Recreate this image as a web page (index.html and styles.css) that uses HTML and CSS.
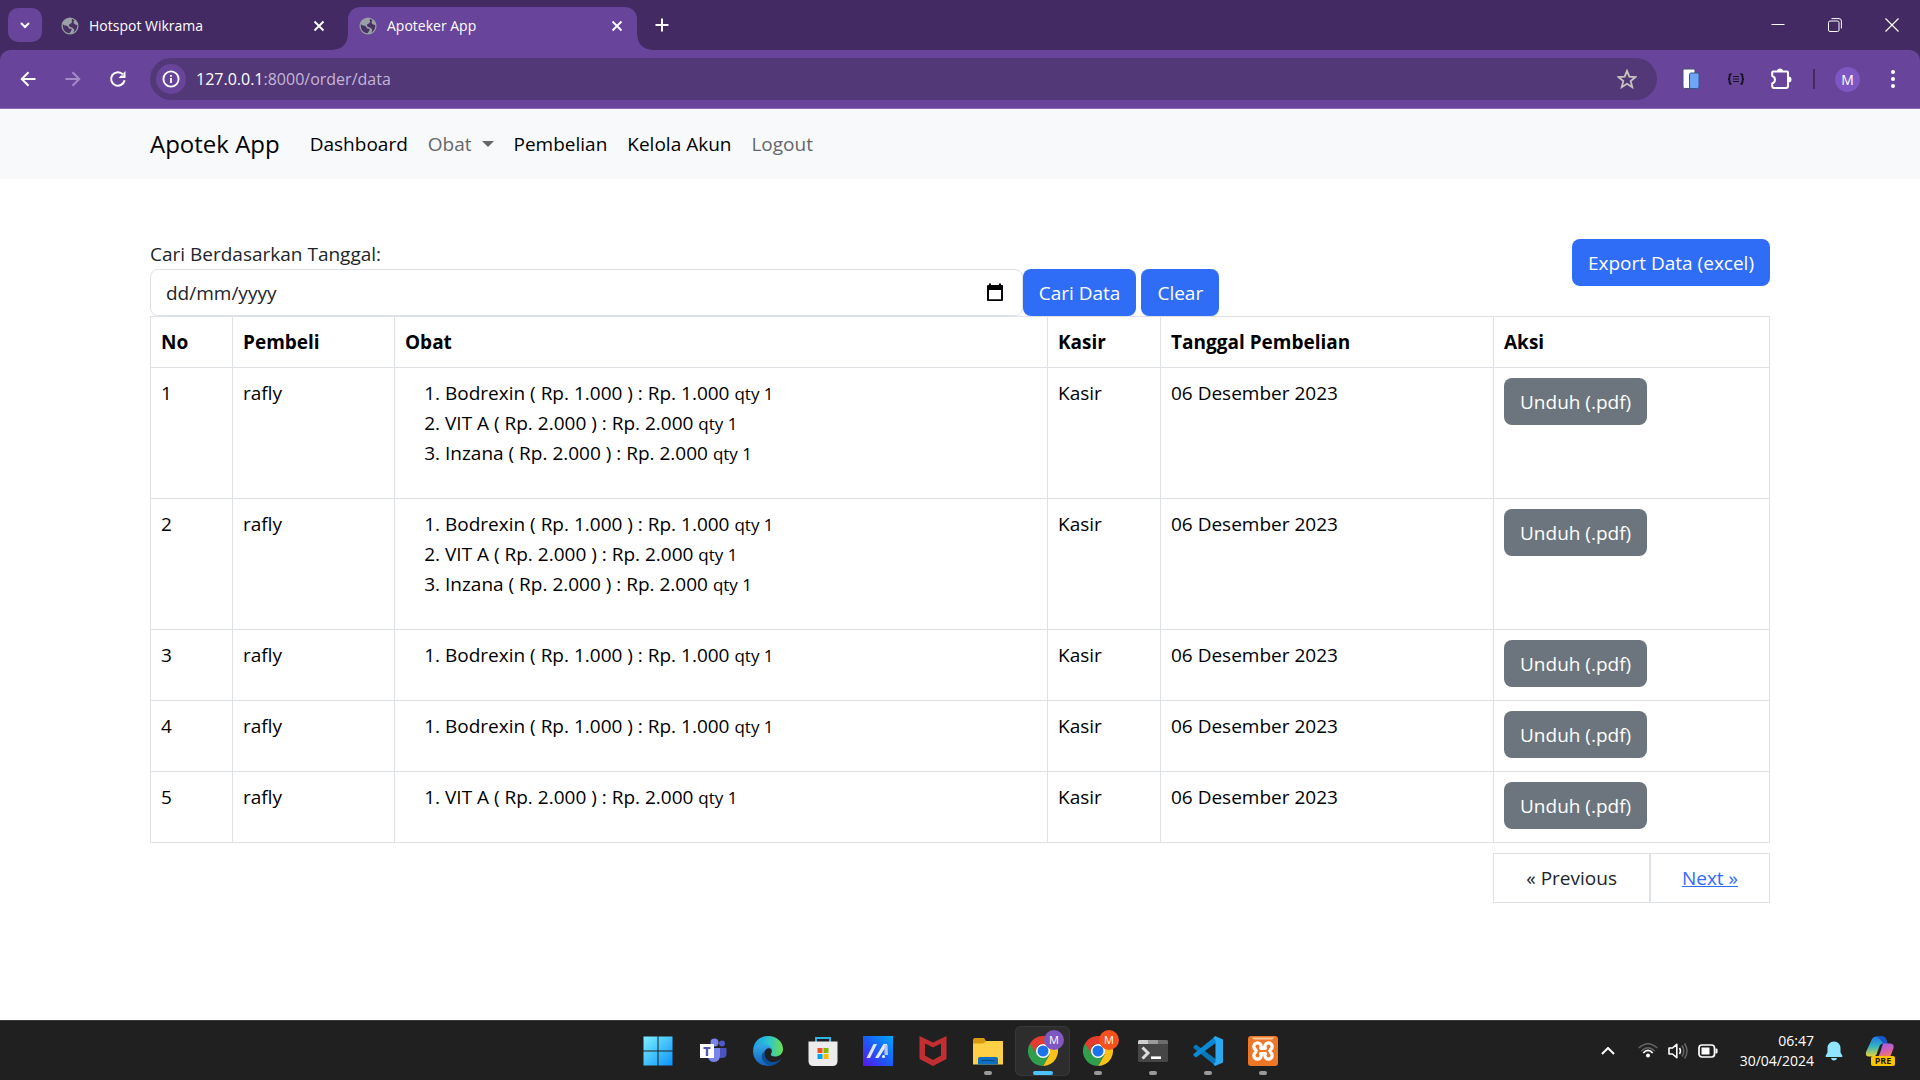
FILE: index.html
```html
<!DOCTYPE html>
<html lang="id">
<head>
<meta charset="utf-8">
<title>Apoteker App</title>
<link rel="stylesheet" href="styles.css">
</head>
<body>
<svg width="0" height="0" class="defs" aria-hidden="true">
  <defs>
    <symbol id="globe" viewBox="0 0 20 20"><circle cx="10" cy="10" r="9.500" fill="#9aa0a6"/><path d="M2 8 C4 10 7 9 8 11 S9 13 11 13 S11 16 9.500 18 C5 18 1.500 14 2 8Z M15 3.500 C13 6 14 8 18 9 C18.500 13 16 16.500 13.500 17.500 C15 15 15 14 14 13 C12 11 11 12 9 10 C8 7.500 11 8 12 6 S11 4 12.500 2.300Z" fill="#483263"/></symbol>
    <symbol id="cross" viewBox="0 0 12 12"><path d="M1.500 1.500 L10.500 10.500 M10.500 1.500 L1.500 10.500" stroke="#fff" stroke-width="1.800" fill="none"/></symbol>
    <symbol id="chrome" viewBox="0 0 30 30"><path d="M15 8 H28.300 A15 15 0 0 1 15 30 L21.500 18.500 Z" fill="#fbc116"/><path d="M2 7.500 A15 15 0 0 0 15 30 L21.500 18.700 L15 15Z" fill="#2f9e4d"/><path d="M2 7.500 A15 15 0 0 1 28.300 8 H15 A7 7 0 0 0 8.500 18.500Z" fill="#e33b2e"/><circle cx="15" cy="15" r="7" fill="#fff"/><circle cx="15" cy="15" r="5.500" fill="#1a73e8"/></symbol>
  </defs>
</svg>

<header class="browser">
  <div class="tabstrip">
    <button class="tab-search" aria-label="Cari tab"><svg width="12" height="12" viewBox="0 0 12 12"><path d="M2 4 L6 8 L10 4" stroke="#fff" stroke-width="2" fill="none"/></svg></button>
    <div class="tab tab-idle">
      <svg width="18" height="18"><use href="#globe"/></svg>
      <span class="tab-title">Hotspot Wikrama</span>
      <button class="icon-btn" aria-label="Tutup tab"><svg width="12" height="12"><use href="#cross"/></svg></button>
    </div>
    <div class="tab tab-active">
      <svg width="18" height="18"><use href="#globe"/></svg>
      <span class="tab-title">Apoteker App</span>
      <button class="icon-btn" aria-label="Tutup tab"><svg width="12" height="12"><use href="#cross"/></svg></button>
    </div>
    <button class="new-tab" aria-label="Tab baru"><svg width="14" height="14" viewBox="0 0 14 14"><path d="M7 0.500 V13.500 M0.500 7 H13.500" stroke="#fff" stroke-width="2"/></svg></button>
    <div class="window-controls">
      <button class="win-btn" aria-label="Kecilkan"><svg width="14" height="14" viewBox="0 0 14 14"><path d="M0.500 6.500 H13.500" stroke="#fff"/></svg></button>
      <button class="win-btn" aria-label="Pulihkan"><svg width="14" height="14" viewBox="0 0 14 14" fill="none" stroke="#fff"><rect x="0.500" y="3" width="10.500" height="10.500" rx="1.500"/><path d="M3.500 0.600 H11 Q13.400 0.600 13.400 3 V10.500" /></svg></button>
      <button class="win-btn" aria-label="Tutup"><svg width="14" height="14" viewBox="0 0 14 14"><path d="M0.500 0.500 L13.500 13.500 M13.500 0.500 L0.500 13.500" stroke="#fff" stroke-width="1.200"/></svg></button>
    </div>
  </div>
  <div class="toolbar">
    <button class="tool" aria-label="Kembali"><svg width="16" height="16" viewBox="0 0 16 16"><path d="M15.500 8 H2 M8.500 1.300 L1.800 8 L8.500 14.700" stroke="#fff" stroke-width="2" fill="none"/></svg></button>
    <button class="tool" aria-label="Maju"><svg width="16" height="16" viewBox="0 0 16 16"><path d="M0.500 8 H14 M7.500 1.300 L14.200 8 L7.500 14.700" stroke="#a58cc9" stroke-width="2" fill="none"/></svg></button>
    <button class="tool" aria-label="Muat ulang"><svg width="18" height="18" viewBox="0 0 18 18"><path d="M15.600 10.300 A6.800 6.800 0 1 1 14 4.400" stroke="#fff" stroke-width="2" fill="none"/><path d="M16.500 1 V8 H9.500 L12 5.500 L14.500 5.500 V3Z" fill="#fff"/></svg></button>
    <div class="omnibox">
      <button class="site-info" aria-label="Info situs"><svg width="18" height="18" viewBox="0 0 18 18"><circle cx="9" cy="9" r="7.600" stroke="#fff" stroke-width="1.900" fill="none"/><path d="M9 8 V13 M9 5 V6.800" stroke="#fff" stroke-width="1.800"/></svg></button>
      <span class="url">127.0.0.1<span class="url-rest">:8000/order/data</span></span>
      <button class="icon-btn" aria-label="Tandai"><svg width="20" height="20" viewBox="0 0 20 20"><path d="M10 1.800 L12.300 7.600 L18.500 8 L13.700 12 L15.300 18.200 L10 14.800 L4.700 18.200 L6.300 12 L1.500 8 L7.700 7.600Z" stroke="#c9c3bf" stroke-width="1.800" fill="none"/></svg></button>
    </div>
    <div class="extensions">
      <button class="tool" aria-label="Ekstensi perangkat"><svg width="18" height="22" viewBox="0 0 18 22"><rect x="1" y="1" width="12" height="19.500" rx="1.500" fill="#fff" stroke="#46536e" stroke-width="1"/><rect x="7.500" y="5" width="9.500" height="15.500" rx="1.500" fill="#6fa5f5" stroke="#35568f" stroke-width="1"/></svg></button>
      <button class="tool" aria-label="Ekstensi JSON"><svg width="18" height="12" viewBox="0 0 18 12" fill="none" stroke="#17121f"><path d="M4.500 1 Q2.500 1 2.500 3 V4.500 Q2.500 6 1 6 Q2.500 6 2.500 7.500 V9 Q2.500 11 4.500 11 M13.500 1 Q15.500 1 15.500 3 V4.500 Q15.500 6 17 6 Q15.500 6 15.500 7.500 V9 Q15.500 11 13.500 11" stroke-width="1.800"/><path d="M6 3.500 H12 M6 6 H12 M6 8.500 H12" stroke-width="1.200"/></svg></button>
      <button class="tool" aria-label="Ekstensi"><svg width="22" height="22" viewBox="0 0 22 22"><path d="M3 3.500 H17 Q18 3.500 18 4.500 V18 Q18 20 16 20 H4 Q2.200 20 2.200 18 V15.500 Q5 14.500 5 11.800 Q5 9 2.200 8 V4.300Z" stroke="#fff" stroke-width="2" fill="none" stroke-linejoin="round"/><path d="M7 3.500 A3 3 0 0 1 13 3.500Z M18.500 8.500 A3 3 0 0 1 18.500 14.500Z" fill="#fff"/></svg></button>
      <span class="divider"></span>
      <button class="tool" aria-label="Profil"><span class="avatar">M</span></button>
      <button class="tool" aria-label="Menu"><svg width="4" height="18" viewBox="0 0 4 18" fill="#fff"><circle cx="2" cy="2" r="2"/><circle cx="2" cy="9" r="2"/><circle cx="2" cy="16" r="2"/></svg></button>
    </div>
  </div>
</header>

<div class="page">
  <nav class="navbar">
    <div class="container nav-row">
      <a class="brand" href="#">Apotek App</a>
      <a class="nav-link" href="#">Dashboard</a>
      <a class="nav-link muted" href="#">Obat <span class="caret"></span></a>
      <a class="nav-link" href="#">Pembelian</a>
      <a class="nav-link" href="#">Kelola Akun</a>
      <a class="nav-link muted" href="#">Logout</a>
    </div>
  </nav>

  <main class="container content">
    <div class="filter-row">
      <form class="filter">
        <label for="tanggal">Cari Berdasarkan Tanggal:</label>
        <div class="filter-controls">
          <div class="date-field">
            <input id="tanggal" type="text" class="date-input" value="dd/mm/yyyy">
            <svg class="calendar" width="18" height="20" viewBox="0 0 18 20"><path d="M1 3 Q1 2 2 2 H3 V0.500 H5 V2 H13 V0.500 H15 V2 H16 Q17 2 17 3 V17 Q17 18 16 18 H2 Q1 18 1 17Z M3 7 V16.200 H15 V7Z" fill="#000" fill-rule="evenodd"/></svg>
          </div>
          <div class="filter-buttons">
            <button type="button" class="btn btn-primary">Cari Data</button>
            <button type="button" class="btn btn-primary">Clear</button>
          </div>
        </div>
      </form>
      <a class="btn btn-primary" href="#">Export Data (excel)</a>
    </div>

    <table class="orders">
      <colgroup><col class="c-no"><col class="c-buyer"><col class="c-obat"><col class="c-kasir"><col class="c-date"><col class="c-aksi"></colgroup>
      <thead>
        <tr><th>No</th><th>Pembeli</th><th>Obat</th><th>Kasir</th><th>Tanggal Pembelian</th><th>Aksi</th></tr>
      </thead>
      <tbody>
        <tr>
          <td>1</td><td>rafly</td>
          <td><ol><li>Bodrexin ( Rp. 1.000 ) : Rp. 1.000 <small>qty 1</small></li><li>VIT A ( Rp. 2.000 ) : Rp. 2.000 <small>qty 1</small></li><li>Inzana ( Rp. 2.000 ) : Rp. 2.000 <small>qty 1</small></li></ol></td>
          <td>Kasir</td><td>06 Desember 2023</td><td><a class="btn btn-secondary" href="#">Unduh (.pdf)</a></td>
        </tr>
        <tr>
          <td>2</td><td>rafly</td>
          <td><ol><li>Bodrexin ( Rp. 1.000 ) : Rp. 1.000 <small>qty 1</small></li><li>VIT A ( Rp. 2.000 ) : Rp. 2.000 <small>qty 1</small></li><li>Inzana ( Rp. 2.000 ) : Rp. 2.000 <small>qty 1</small></li></ol></td>
          <td>Kasir</td><td>06 Desember 2023</td><td><a class="btn btn-secondary" href="#">Unduh (.pdf)</a></td>
        </tr>
        <tr>
          <td>3</td><td>rafly</td>
          <td><ol><li>Bodrexin ( Rp. 1.000 ) : Rp. 1.000 <small>qty 1</small></li></ol></td>
          <td>Kasir</td><td>06 Desember 2023</td><td><a class="btn btn-secondary" href="#">Unduh (.pdf)</a></td>
        </tr>
        <tr>
          <td>4</td><td>rafly</td>
          <td><ol><li>Bodrexin ( Rp. 1.000 ) : Rp. 1.000 <small>qty 1</small></li></ol></td>
          <td>Kasir</td><td>06 Desember 2023</td><td><a class="btn btn-secondary" href="#">Unduh (.pdf)</a></td>
        </tr>
        <tr>
          <td>5</td><td>rafly</td>
          <td><ol><li>VIT A ( Rp. 2.000 ) : Rp. 2.000 <small>qty 1</small></li></ol></td>
          <td>Kasir</td><td>06 Desember 2023</td><td><a class="btn btn-secondary" href="#">Unduh (.pdf)</a></td>
        </tr>
      </tbody>
    </table>

    <div class="pager">
      <span class="page-item">« Previous</span>
      <a class="page-item page-link" href="#">Next »</a>
    </div>
  </main>
</div>

<footer class="taskbar">
  <div class="spacer"></div>
  <div class="apps">
    <button class="app" aria-label="Start"><svg width="30" height="30" viewBox="0 0 30 30"><defs><linearGradient id="win" x1="0" y1="0" x2="1" y2="1"><stop offset="0" stop-color="#7df0ff"/><stop offset="1" stop-color="#0a93fb"/></linearGradient></defs><path d="M0.500 0.500 H14.500 V14.500 H0.500Z M15.500 0.500 H29.500 V14.500 H15.500Z M0.500 15.500 H14.500 V29.500 H0.500Z M15.500 15.500 H29.500 V29.500 H15.500Z" fill="url(#win)"/></svg></button>
    <button class="app" aria-label="Teams"><svg width="30" height="30" viewBox="0 0 30 30"><circle cx="24" cy="7.500" r="3" fill="#5059c9"/><path d="M20 12 H28.500 V18 Q28.500 22 24 22 H20Z" fill="#4b53bc"/><circle cx="16.500" cy="6.500" r="4" fill="#7b83eb"/><path d="M10 12 H22 V19 Q22 26 16 26 Q11 26 10 21Z" fill="#7b83eb"/><rect x="2" y="8" width="14" height="14" fill="#fff"/><path d="M5.500 11 H12.500 V13 H10.200 V20 H7.800 V13 H5.500Z" fill="#5558af"/></svg></button>
    <button class="app" aria-label="Edge"><svg width="30" height="30" viewBox="0 0 30 30"><defs><linearGradient id="edge1"><stop offset="0" stop-color="#1b9de2"/><stop offset="0.500" stop-color="#2cc3d5"/><stop offset="1" stop-color="#6be04b"/></linearGradient><linearGradient id="edge2" x1="0" y1="0" x2="0" y2="1"><stop offset="0" stop-color="#35a9e8"/><stop offset="1" stop-color="#0f62b8"/></linearGradient></defs><path d="M0 14 C1 4 8 0 15 0 C24 0 30 6 30 13 C30 18 26 20.500 22 20.500 C18 20.500 17 19 18.500 17 C20 12 16 9 11 9 C5 9 1 12 0 14Z" fill="url(#edge1)"/><path d="M0 15 C1 10 6 8 10 8 C15 8 19 11 19 14 C17 11 12 12 11 17 C10 23 15 28 21 28 C19 29.500 17 30 15 30 C6 30 0 23 0 15Z" fill="url(#edge2)"/><path d="M12.500 15 C10 20 14 26 20 26 C24 26 27 24 28.500 22 C26 27 21 30 16 29.500 C7 26 7 17 12.500 15Z" fill="#0d4f9c"/></svg></button>
    <button class="app" aria-label="Store"><svg width="30" height="30" viewBox="0 0 30 30"><path d="M8 7 V2 H22 V7" stroke="#2fb4e8" stroke-width="2" fill="none"/><path d="M0.500 5.500 H29.500 V25 Q29.500 30 24.500 30 H5.500 Q0.500 30 0.500 25Z" fill="#ececec"/><rect x="9.500" y="12" width="5" height="5" fill="#f25022"/><rect x="15.500" y="12" width="5" height="5" fill="#7fba00"/><rect x="9.500" y="18" width="5" height="5" fill="#00a4ef"/><rect x="15.500" y="18" width="5" height="5" fill="#ffb900"/></svg></button>
    <button class="app" aria-label="MyASUS"><svg width="30" height="30" viewBox="0 0 30 30"><defs><linearGradient id="asus" x1="0" y1="1" x2="1" y2="0"><stop offset="0" stop-color="#5a16f0"/><stop offset="0.500" stop-color="#1a5cf5"/><stop offset="1" stop-color="#00aaff"/></linearGradient></defs><rect width="30" height="30" fill="url(#asus)"/><path d="M3.500 22 L10.500 8 H14 L7 22Z" fill="#dfe4ff"/><path d="M12 22 L20.500 8 H24 V12 L22 12 L15.500 22Z" fill="#e6eaff"/><path d="M21.500 9 H24.500 L25 19 H21.500Z" fill="#b9c6fb"/><circle cx="20.500" cy="20.500" r="1.500" fill="#fff"/></svg></button>
    <button class="app" aria-label="McAfee"><svg width="30" height="30" viewBox="0 0 30 30"><path d="M1.500 0 L15 6.500 L28.500 0 V23 L15 30 L1.500 23Z M7 7.500 V19.500 L15 24 L23 19.500 V7.500 L15 11.500Z" fill="#c12f33" fill-rule="evenodd"/></svg></button>
    <button class="app running" aria-label="File Explorer"><svg width="30" height="30" viewBox="0 0 30 30"><path d="M0 4 Q0 2 2 2 H11 L13 5 L11 8 H0Z" fill="#d99a10"/><path d="M0 7.500 H10 L13 5 H30 V28.500 H0Z" fill="#ffd045"/><path d="M5 28.500 V23 Q5 21 7 21 H23 Q25 21 25 23 V28.500Z" fill="#0f6fc0"/><path d="M8.500 24.500 H21.500" stroke="#0a4a87" stroke-width="1.200"/></svg></button>
    <button class="app running current" aria-label="Chrome M"><svg width="30" height="30"><use href="#chrome"/></svg><span class="badge">M</span></button>
    <button class="app running" aria-label="Chrome M kedua"><svg width="30" height="30"><use href="#chrome"/></svg><span class="badge badge-orange">M</span></button>
    <button class="app running" aria-label="Terminal"><svg width="30" height="30" viewBox="0 0 30 30"><rect y="4" width="30" height="22" rx="1.500" fill="#464646"/><path d="M0 8 V5.500 Q0 4 1.500 4 H10 V8Z" fill="#cfcfcf"/><path d="M10 4 H20 V8 H10Z" fill="#9a9a9a"/><path d="M20 4 H28.500 Q30 4 30 5.500 V8 H20Z" fill="#6c6c6c"/><path d="M4.500 11.500 L10 17 L4.500 22.500" stroke="#dcdcdc" stroke-width="3" fill="none"/><path d="M13 21.700 H23" stroke="#fff" stroke-width="2.600"/></svg></button>
    <button class="app running" aria-label="Visual Studio Code"><svg width="30" height="30" viewBox="0 0 30 30"><path d="M0.500 10.500 L3 8.500 L24 24 L22 29.500 L0.500 12Z" fill="#0877b9"/><path d="M0.500 19.500 L3 21.500 L24 6 L22 0.500 L0.500 18Z" fill="#0a8ad6"/><path d="M22 0 L30 3.500 V26.500 L22 30 L20.500 28 L22.500 26 V4 L20.500 2Z" fill="#2aa9f2"/></svg></button>
    <button class="app running" aria-label="XAMPP"><svg width="30" height="30" viewBox="0 0 30 30"><rect width="30" height="30" rx="3" fill="#ee7627"/><path d="M3.500 1.500 H26.500 L24 3.500 H6Z" fill="#fbc9a0"/><g fill="#fff"><circle cx="9.500" cy="10.500" r="5.300"/><circle cx="20.500" cy="10.500" r="5.300"/><circle cx="9.500" cy="19.500" r="5.300"/><circle cx="20.500" cy="19.500" r="5.300"/><rect x="7" y="10.500" width="16" height="9"/></g><g fill="#ee7627"><circle cx="9.500" cy="10.500" r="2"/><circle cx="20.500" cy="10.500" r="2"/><circle cx="9.500" cy="19.500" r="2"/><circle cx="20.500" cy="19.500" r="2"/></g><path d="M9.500 19.500 Q10 15 12 15 H18 Q20 15 20.500 19.500 M20.500 10.500 Q20 15 17 15 M9.500 10.500 Q10 15 13 15" stroke="#ee7627" stroke-width="2.200" fill="none"/></svg></button>
  </div>
  <div class="tray">
    <svg class="tray-chevron" width="14" height="8" viewBox="0 0 14 8"><path d="M1 7 L7 1 L13 7" stroke="#fff" stroke-width="2" fill="none"/></svg>
    <div class="status">
      <svg width="20" height="20" viewBox="0 0 20 20" fill="none"><path d="M0.800 7 Q10 -1.500 19.200 7 M3.500 10 Q10 3.500 16.500 10" stroke="#666" stroke-width="1.600"/><path d="M5.300 12 Q10 6.800 14.700 12" stroke="#fff" stroke-width="1.600"/><circle cx="10" cy="14.500" r="2" fill="#fff"/></svg>
      <svg width="20" height="20" viewBox="0 0 20 20" fill="none"><path d="M1 7 H4.500 L8.800 3.300 V16.700 L4.500 13 H1Z" stroke="#fff" stroke-width="1.600" stroke-linejoin="round"/><path d="M11.500 7 Q13.500 10 11.500 13" stroke="#fff" stroke-width="1.500"/><path d="M14 4.500 Q17.500 10 14 15.500 M16.500 2.500 Q21.500 10 16.500 17.500" stroke="#666" stroke-width="1.500"/></svg>
      <svg width="20" height="20" viewBox="0 0 20 20"><rect x="1" y="4" width="15.500" height="12" rx="3" fill="none" stroke="#fff" stroke-width="1.700"/><rect x="3.500" y="6.500" width="8" height="7" fill="#fff"/><path d="M17.500 7.500 H18.500 Q19.500 7.500 19.500 8.500 V11.500 Q19.500 12.500 18.500 12.500 H17.500Z" fill="#fff"/></svg>
    </div>
    <div class="clock"><span>06:47</span><span>30/04/2024</span></div>
    <svg class="bell" width="18" height="20" viewBox="0 0 18 20"><path d="M9 0.500 C13 0.500 15.500 3.500 15.500 7 V11.500 L17.500 15 Q17.500 16 16.500 16 H1.500 Q0.500 16 0.500 15 L2.500 11.500 V7 C2.500 3.500 5 0.500 9 0.500Z M6 17 H12 Q11.500 19.500 9 19.500 Q6.500 19.500 6 17Z" fill="#8fe5ff"/></svg>
    <div class="copilot">
      <svg width="30" height="26" viewBox="0 0 30 26"><defs><linearGradient id="cp1" x1="0" y1="0" x2="0" y2="1"><stop offset="0" stop-color="#1b78ea"/><stop offset="0.500" stop-color="#35b3c0"/><stop offset="1" stop-color="#e8d535"/></linearGradient><linearGradient id="cp2" x1="0" y1="0" x2="0.300" y2="1"><stop offset="0" stop-color="#9b5ff0"/><stop offset="0.600" stop-color="#d25fb4"/><stop offset="1" stop-color="#f2795e"/></linearGradient></defs><path d="M7 3 Q8 0.500 11 0.500 H18 Q20 0.500 21 3 L22.500 7.500 H18 Q15.500 7.500 14.500 10 L11.500 18.500 Q10.500 20.500 8 20.500 H4 Q0 20.500 1 16Z" fill="url(#cp1)"/><path d="M11 0.500 H18 Q20 0.500 21 3 L22.500 7.500 H18 Q15 2 11 0.500Z" fill="#1a56c8"/><path d="M18 7.500 H25.500 Q29.500 8 28.500 12 L26 19 Q25 21.500 22 21.500 H12 Q14 20 15 17Z" fill="url(#cp2)"/></svg>
      <span class="pre">PRE</span>
    </div>
  </div>
</footer>
</body>
</html>
```
FILE: styles.css
```css
* { box-sizing: border-box; }

html, body { height: 100%; }

body {
  margin: 0;
  display: flex;
  flex-direction: column;
  background: #fff;
  color: #212529;
  font-family: "Open Sans", "Noto Sans", sans-serif;
  font-size: 19px;
  line-height: 30px;
}

button {
  border: 0;
  padding: 0;
  background: none;
  color: inherit;
  font: inherit;
}

svg { display: block; flex: none; }
.defs { position: absolute; }

/* Browser frame */
.browser { background: #432a62; color: #fff; font-size: 14px; }

.tabstrip { display: flex; align-items: stretch; height: 50px; padding-left: 8px; }

.tab-search {
  display: grid;
  place-items: center;
  width: 34px;
  height: 34px;
  margin-top: 8px;
  border-radius: 10px;
  background: #68449b;
}

.tab {
  position: relative;
  display: flex;
  align-items: center;
  gap: 10px;
  width: 289px;
  margin-top: 7px;
  padding: 0 14px 6px 11px;
  border-radius: 12px 12px 0 0;
}
.tab-idle { margin-left: 8px; margin-right: 9px; }
.tab-active { background: #68449b; }
.tab-active::before,
.tab-active::after {
  content: "";
  position: absolute;
  bottom: 0;
  width: 14px;
  height: 14px;
}
.tab-active::before { right: 100%; background: radial-gradient(circle at 0 0, #432a62 13px, #68449b 14px); }
.tab-active::after { left: 100%; background: radial-gradient(circle at 100% 0, #432a62 13px, #68449b 14px); }
.tab-title { flex: 1; white-space: nowrap; }

.icon-btn { display: grid; place-items: center; }
.new-tab { display: grid; place-items: center; width: 50px; }

.window-controls { display: flex; margin-left: auto; }
.win-btn { display: grid; place-items: center; width: 57px; }

.toolbar {
  display: flex;
  align-items: center;
  height: 59px;
  padding: 0 5px;
  border-bottom: 1px solid #8a68b5;
  border-radius: 10px 10px 0 0;
  background: #68449b;
}
.tool { display: grid; place-items: center; width: 45px; height: 42px; }

.omnibox {
  display: flex;
  flex: 1;
  align-items: center;
  gap: 10px;
  height: 42px;
  margin-left: 10px;
  padding: 0 20px 0 6px;
  border-radius: 21px;
  background: #533878;
}
.site-info { display: grid; place-items: center; width: 30px; height: 30px; border-radius: 50%; background: #68449b; }
.url { flex: 1; font-size: 16px; }
.url-rest { color: #c3b5d6; }

.extensions { display: flex; align-items: center; margin-left: 11px; }
.divider { width: 2px; height: 20px; margin: 0 10px; background: #432a62; }
.avatar { width: 25px; height: 25px; border-radius: 50%; background: #7e57c2; font-size: 14px; line-height: 25px; text-align: center; }

/* Page */
.page { flex: 1; }
.container { width: 100%; max-width: 1650px; margin: 0 auto; padding: 0 15px; }

.navbar { background: #f8f9fa; padding: 10px 0; }
.nav-row { display: flex; align-items: center; gap: 20px; min-height: 50px; }
.brand { margin-right: 10px; color: #000; font-size: 24px; text-decoration: none; }
.nav-link { display: flex; align-items: center; gap: 10px; color: #000; text-decoration: none; }
.muted { color: #65676a; }
.caret { border: 6px solid transparent; border-top-color: currentColor; border-bottom: 0; }

.content { padding-top: 60px; padding-bottom: 60px; }

.filter-row { display: flex; align-items: flex-start; justify-content: space-between; }
.filter { width: 66%; }
.filter label { display: block; }
.filter-controls { display: flex; }
.date-field { position: relative; flex: 1; }
.date-input {
  width: 100%;
  height: 47px;
  padding: 0 15px;
  border: 1px solid #dee2e6;
  border-radius: 8px;
  background: #fff;
  color: #212529;
  font: inherit;
}
.calendar { position: absolute; top: 14px; right: 19px; }
.filter-buttons { display: flex; gap: 5px; }

.btn {
  display: inline-block;
  padding: 9px 16px 8px;
  border-radius: 8px;
  color: #fff;
  text-decoration: none;
  white-space: nowrap;
}
.btn-primary { background: #2f6df6; }
.btn-secondary { background: #6c757d; }

.orders { width: 100%; table-layout: fixed; border-collapse: collapse; color: #000; }
.orders th, .orders td { padding: 10px; border: 1px solid #dee2e6; text-align: left; vertical-align: top; }
.orders th { font-weight: 700; }
.c-no { width: 82px; }
.c-buyer { width: 162px; }
.c-kasir { width: 113px; }
.c-date { width: 333px; }
.c-aksi { width: 276px; }
.orders ol { margin: 0 0 20px; padding-left: 40px; }
.orders td .btn { display: block; width: fit-content; }
small { font-size: 17px; line-height: 20px; }

.pager { display: flex; justify-content: flex-end; margin-top: 10px; }
.page-item { padding: 9px 32px; border: 1px solid #dee2e6; }
.page-link { padding: 9px 31px; color: #2f6df6; }

/* Taskbar */
.taskbar {
  display: grid;
  grid-template-columns: 1fr auto 1fr;
  height: 60px;
  border-top: 1px solid #3a3a3a;
  background: #202020;
  color: #fff;
}
.apps { display: flex; align-items: center; }
.app { position: relative; display: grid; place-items: center; width: 55px; height: 50px; }
.running::after {
  content: "";
  position: absolute;
  bottom: 1px;
  left: 24px;
  width: 8px;
  height: 4px;
  border-radius: 2px;
  background: #9a9a9a;
}
.current { border-radius: 6px; background: #2d2d2d; box-shadow: inset 0 0 0 1px #383838; }
.current::after { left: 18px; width: 20px; background: #4cc2ff; }
.badge {
  position: absolute;
  top: 4px;
  right: 6px;
  width: 20px;
  height: 20px;
  border-radius: 50%;
  background: #7e57c2;
  font-size: 11px;
  line-height: 20px;
}
.badge-orange { background: #f4511e; }

.tray { display: flex; align-items: center; justify-content: flex-end; padding-right: 25px; }
.tray-chevron { margin-right: 23px; }
.status { display: flex; gap: 10px; }
.clock { display: flex; flex-direction: column; margin-left: 22px; font-size: 14px; line-height: 20px; text-align: right; }
.bell { margin: 0 22px 0 11px; }
.copilot { position: relative; height: 30px; }
.pre {
  position: absolute;
  right: 0;
  bottom: 0;
  width: 24px;
  border-radius: 2px;
  background: #ffc400;
  color: #201800;
  font-size: 9px;
  font-weight: 700;
  line-height: 10px;
  text-align: center;
}
```
